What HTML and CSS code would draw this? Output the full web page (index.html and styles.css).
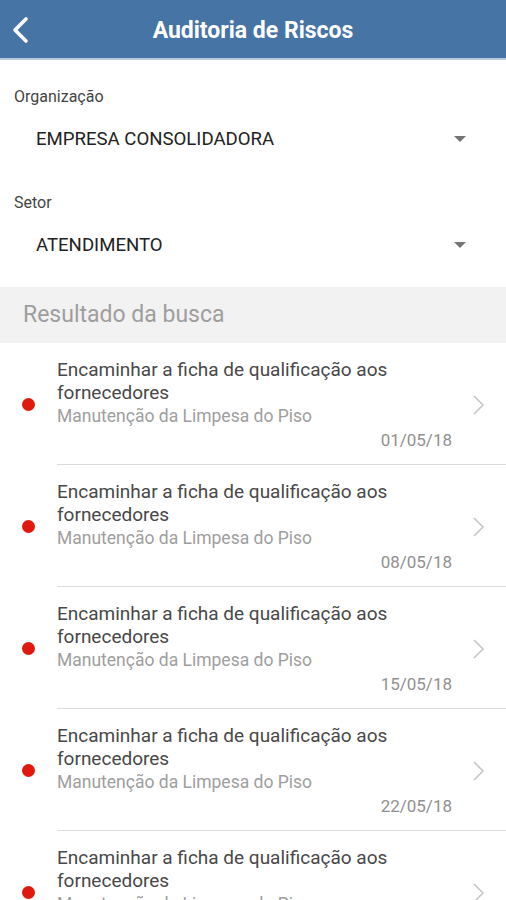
FILE: index.html
```html
<!DOCTYPE html>
<html lang="pt-BR">
<head>
  <meta charset="UTF-8">
  <title>Auditoria de Riscos</title>
  <link rel="stylesheet" href="styles.css">
</head>
<body>

<div class="topbar">
  <a class="back">
    <svg width="20" height="28" viewBox="0 0 20 28"><path d="M16 3 L5 14 L16 25" fill="none" stroke="#fff" stroke-width="3.6" stroke-linecap="round" stroke-linejoin="round"/></svg>
  </a>
  <h1 class="title">Auditoria de Riscos</h1>
</div>

<div class="filters">
  <div class="field">
    <label class="field-label">Organização</label>
    <div class="select">
      <span>EMPRESA CONSOLIDADORA</span>
      <span class="caret"></span>
    </div>
  </div>
  <div class="field">
    <label class="field-label">Setor</label>
    <div class="select">
      <span>ATENDIMENTO</span>
      <span class="caret"></span>
    </div>
  </div>
</div>

<div class="section-head">Resultado da busca</div>

<!-- Result list -->
<div class="results">
  <div class="item">
    <div class="status"><span class="dot"></span></div>
    <div class="item-body">
      <div class="item-text">
        <div class="item-title">Encaminhar a ficha de qualificação aos fornecedores</div>
        <div class="item-sub">Manutenção da Limpesa do Piso</div>
        <div class="item-date">01/05/18</div>
      </div>
      <div class="chev"><svg width="14" height="22" viewBox="0 0 14 22"><path d="M2 2 L11 11 L2 20" fill="none" stroke="#c4c4c4" stroke-width="1.5"/></svg></div>
    </div>
  </div>
  <div class="item">
    <div class="status"><span class="dot"></span></div>
    <div class="item-body">
      <div class="item-text">
        <div class="item-title">Encaminhar a ficha de qualificação aos fornecedores</div>
        <div class="item-sub">Manutenção da Limpesa do Piso</div>
        <div class="item-date">08/05/18</div>
      </div>
      <div class="chev"><svg width="14" height="22" viewBox="0 0 14 22"><path d="M2 2 L11 11 L2 20" fill="none" stroke="#c4c4c4" stroke-width="1.5"/></svg></div>
    </div>
  </div>
  <div class="item">
    <div class="status"><span class="dot"></span></div>
    <div class="item-body">
      <div class="item-text">
        <div class="item-title">Encaminhar a ficha de qualificação aos fornecedores</div>
        <div class="item-sub">Manutenção da Limpesa do Piso</div>
        <div class="item-date">15/05/18</div>
      </div>
      <div class="chev"><svg width="14" height="22" viewBox="0 0 14 22"><path d="M2 2 L11 11 L2 20" fill="none" stroke="#c4c4c4" stroke-width="1.5"/></svg></div>
    </div>
  </div>
  <div class="item">
    <div class="status"><span class="dot"></span></div>
    <div class="item-body">
      <div class="item-text">
        <div class="item-title">Encaminhar a ficha de qualificação aos fornecedores</div>
        <div class="item-sub">Manutenção da Limpesa do Piso</div>
        <div class="item-date">22/05/18</div>
      </div>
      <div class="chev"><svg width="14" height="22" viewBox="0 0 14 22"><path d="M2 2 L11 11 L2 20" fill="none" stroke="#c4c4c4" stroke-width="1.5"/></svg></div>
    </div>
  </div>
  <div class="item">
    <div class="status"><span class="dot"></span></div>
    <div class="item-body">
      <div class="item-text">
        <div class="item-title">Encaminhar a ficha de qualificação aos fornecedores</div>
        <div class="item-sub">Manutenção da Limpesa do Piso</div>
        <div class="item-date">29/05/18</div>
      </div>
      <div class="chev"><svg width="14" height="22" viewBox="0 0 14 22"><path d="M2 2 L11 11 L2 20" fill="none" stroke="#c4c4c4" stroke-width="1.5"/></svg></div>
    </div>
  </div>
</div>

</body>
</html>
```

FILE: styles.css
```css
body {
  margin: 0;
  font-family: Roboto, "Noto Sans", sans-serif;
  background: #fff;
  overflow: hidden;
}

/* Top bar */
.topbar {
  height: 58px;
  background-color: #4674a4;
  border-bottom: 2px solid #b9c9db;
  display: flex;
  align-items: center;
  justify-content: center;
  position: relative;
}

.back {
  position: absolute;
  left: 10px;
  top: 16px;
  line-height: 0;
}

.title {
  margin: 0;
  padding-top: 2px;
  color: #fff;
  font-size: 23px;
  font-weight: bold;
}

/* Filters */
.filters {
  padding: 27px 0 20px;
}

.field + .field {
  margin-top: 32px;
}

.field-label {
  display: block;
  padding-left: 14px;
  font-size: 16px;
  line-height: 20px;
  color: #444;
}

.select {
  height: 44px;
  margin-top: 10px;
  padding: 0 40px 0 36px;
  display: flex;
  align-items: center;
  justify-content: space-between;
  font-size: 18.6px;
  color: #222;
}

.caret {
  width: 0;
  height: 0;
  border-left: 6px solid transparent;
  border-right: 6px solid transparent;
  border-top: 6px solid #757575;
}

.section-head {
  height: 56px;
  line-height: 56px;
  padding-left: 23px;
  background-color: #f2f2f2;
  color: #9e9e9e;
  font-size: 23px;
}

/* Result list */
.item {
  display: flex;
  align-items: center;
}

.status {
  width: 57px;
  flex-shrink: 0;
}

.dot {
  display: block;
  width: 13px;
  height: 13px;
  margin-left: 22px;
  border-radius: 50%;
  background-color: #e0190f;
}

.item-body {
  flex: 1;
  display: flex;
  align-items: center;
  padding: 15px 0 12px;
  border-bottom: 1px solid #dcdcdc;
}

.item-text {
  flex: 1;
}

.item-title {
  font-size: 19px;
  line-height: 23px;
  color: #484848;
  padding-right: 30px;
}

.item-sub {
  font-size: 17.5px;
  line-height: 24px;
  color: #9e9e9e;
}

.item-date {
  font-size: 17px;
  line-height: 24px;
  color: #909090;
  text-align: right;
}

.chev {
  width: 54px;
  flex-shrink: 0;
  display: flex;
  justify-content: center;
  line-height: 0;
}
```
